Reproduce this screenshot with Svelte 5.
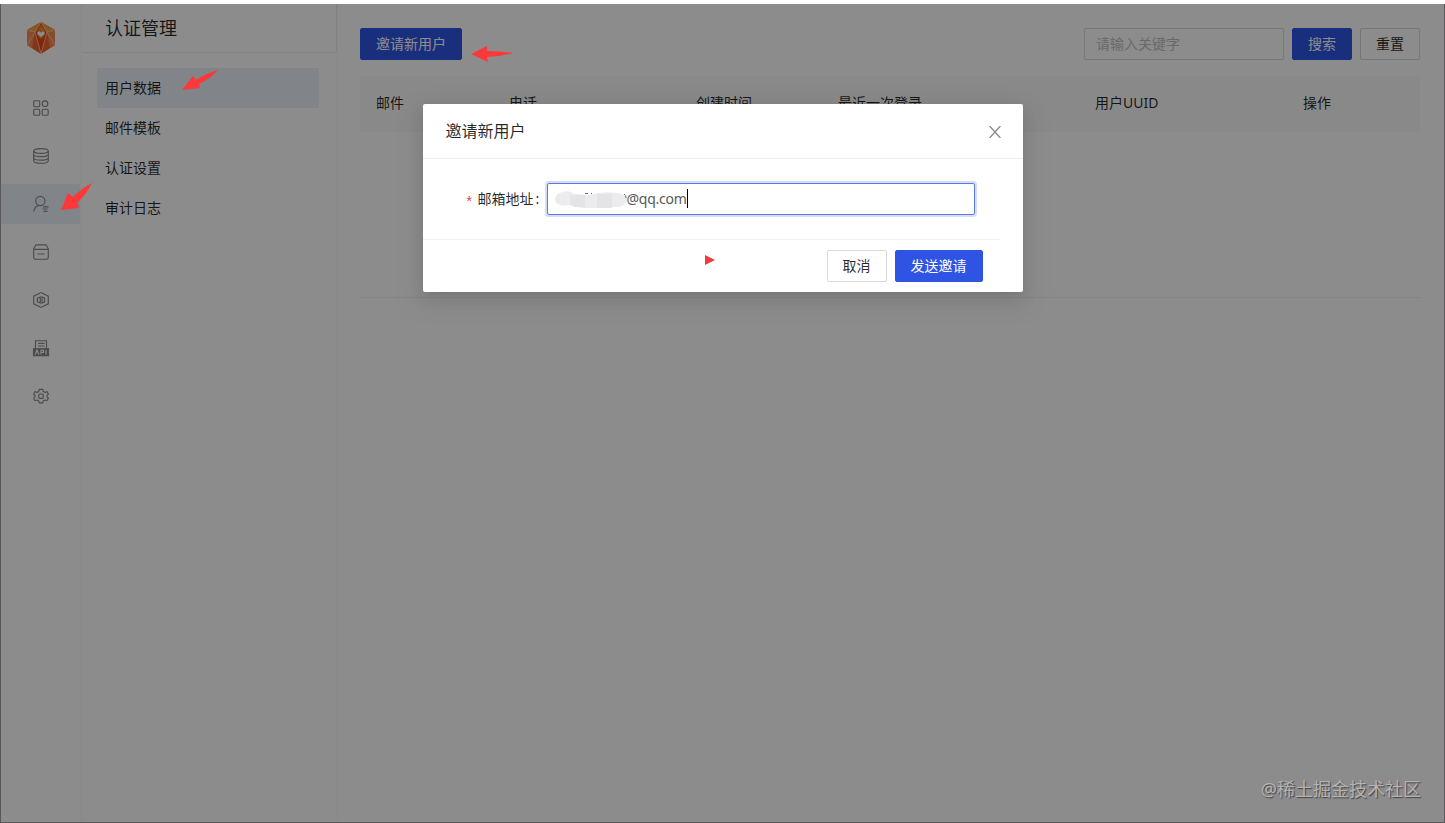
<script>
  let email = "@qq.com"
  let active = "user"
  const navItems = ["apps", "database", "user", "storage", "function", "api", "settings"]
  const menuItems = ["用户数据", "邮件模板", "认证设置", "审计日志"]
  const columns = ["邮件", "电话", "创建时间", "最近一次登录", "用户UUID", "操作"]
</script>

<div class="page">
  <nav class="rail">
    <svg class="logo" viewBox="0 0 28 32" width="28" height="32">
      <path d="M14 0 L28 8 V23 L14 32 L0 23 V8 Z" fill="#f0602a" />
      <path d="M14 0 L28 8 L20 10 Z M14 0 L0 8 L8 10 Z" fill="#f3a04a" />
      <path d="M0 8 L8 10 L5 26 L0 23 Z M28 8 L20 10 L23 26 L28 23 Z" fill="#f58a58" />
      <path d="M8 10 L14 32 L20 10 Z" fill="#e8431c" />
      <path d="M0 8 L8 10 L14 32 L20 10 L28 8 M8 10 L14 0 L20 10 M8 10 L0 23 M20 10 L28 23" fill="none" stroke="#ffd0a0" stroke-width=".8" />
      <path d="M14 3 C16 7 19 8 18 12 C17 15 14 17 14 17 C14 17 11 15 10 12 C9 9 13 8 14 3 Z" fill="#f08a2a" />
      <path d="M14 15 L10.5 12 C10 9 13 9 14 11 C15 9 18 9 17.5 12 Z" fill="#fff" />
    </svg>
    {#each navItems as item}
      <div class="rail-item" class:active={item == active}>
        <svg viewBox="0 0 16 16" width="16" height="16">
          {#if item == "apps"}
            <rect x=".7" y=".7" width="6" height="6" rx="1" />
            <circle cx="12" cy="3.7" r="2.8" />
            <rect x=".7" y="9.2" width="6" height="6" rx="1.3" />
            <rect x="9.2" y="9.2" width="6" height="6" rx="1.3" />
          {:else if item == "database"}
            <ellipse cx="8" cy="3" rx="7.3" ry="2.4" />
            <path d="M.7 3 V13 C.7 16 15.3 16 15.3 13 V3 M.7 6.5 C.7 9.4 15.3 9.4 15.3 6.5 M.7 10 C.7 12.8 15.3 12.8 15.3 10" />
          {:else if item == "user"}
            <circle cx="7.3" cy="5" r="4.6" />
            <path d="M.8 15.5 C1.2 12 3.2 10.2 5.6 9.4 M10 10.8 H15.5 M9.5 13 H14.5 M10.5 15.3 H14.5" />
          {:else if item == "storage"}
            <path d="M3 .8 H13 L15.3 4.8 V13.5 Q15.3 15.2 13.6 15.2 H2.4 Q.7 15.2 .7 13.5 V4.8 Z M.7 5.4 H15.3 M4.5 10 H11.5" />
          {:else if item == "function"}
            <path d="M8 .6 L15.3 4.2 V11.8 L8 15.4 L.7 11.8 V4.2 Z" />
            <path d="M7.3 5 L4.4 6.2 V9.8 L7.3 11 Z M9 5 V11 L11.6 9.8 V6.2 Z" />
          {:else if item == "api"}
            <path d="M2.5 8 V.7 H13.5 V8 M5 3.4 H11.5 M5 6 H11.5" />
            <rect class="fill" x=".5" y="8.7" width="15" height="7" />
            <path class="light" d="M2.2 14.5 L4 10 L5.8 14.5 M8 14.5 V10.3 H10.5 V12.5 H8 M13 10 V14.5" />
          {:else}
            <path d="M6.3 1.3 H9.7 L10.3 3.5 L12.2 4.4 L14.2 3.8 L15.4 6.2 L14 7.6 V8.8 L15.4 10.2 L14 12.6 L12 12 L10.3 12.9 L9.7 14.9 H6.3 L5.7 12.9 L4 12 L2 12.6 L.6 10.2 L2 8.8 V7.6 L.6 6.2 L2 3.8 L4 4.4 L5.7 3.5 Z" />
            <rect x="5.8" y="6" width="4.4" height="4.4" rx="1" />
          {/if}
        </svg>
      </div>
    {/each}
  </nav>

  <aside>
    <h1>认证管理</h1>
    <ul>
      {#each menuItems as item, i}
        <li class:selected={i == 0}>{item}</li>
      {/each}
    </ul>
  </aside>

  <main>
    <div class="toolbar">
      <button class="btn primary">邀请新用户</button>
      <div class="search">
        <input class="keyword" placeholder="请输入关键字" />
        <button class="btn primary">搜索</button>
        <button class="btn">重置</button>
      </div>
    </div>
    <div class="table">
      <div class="thead">
        {#each columns as column}
          <span>{column}</span>
        {/each}
      </div>
      <div class="tbody"></div>
    </div>
  </main>
</div>

<div class="mask">
  <div class="modal">
    <header>
      <span>邀请新用户</span>
      <svg viewBox="0 0 12 12" width="12" height="12"><path d="M.6 0 L11.4 12 M11.4 0 L.6 12" /></svg>
    </header>
    <div class="form-row">
      <span class="label"><i>*</i>邮箱地址<b>:</b></span>
      <div class="field">
        <svg class="smudge" viewBox="0 0 72 20" width="72" height="20">
          <path d="M8 3 Q15 1 19 5 L34 6 Q47 2 62 4 Q72 5 72 11 Q71 18 62 18 L45 19 L28 19 Q22 19 15 16 Q0 18 0 10 Q1 4 8 3 Z" fill="#ececee" />
          <path d="M15 6 H30 V18 H20 L15 16 Z M42 5 H57 V19 H42 Z" fill="#e4e4e6" />
          <path d="M30 4.5 H33 M36 5 L37 4 M69 5 Q71 6 71 9" fill="none" stroke="#666" />
        </svg>
        <span class="value">{email}</span>
        <span class="caret"></span>
      </div>
    </div>
    <footer>
      <button class="btn">取消</button>
      <button class="btn primary">发送邀请</button>
    </footer>
  </div>
</div>

<svg class="marks" viewBox="0 0 1445 823" width="1445" height="823">
  <path d="M182 90 L193 76 L196 80 Q207 73 218 70 Q210 79 199 84 L200 88 Z" />
  <path d="M61 210 L68 193 L73 197 Q82 188 92 183 Q86 195 77 203 L79 208 Z" />
  <path d="M471 54 L487 46 V51 Q500 51 513 53 Q500 57 487 57 L488 62 Z" />
  <path d="M705 255 L715 260 L705 265 Z" fill="#ee3b3b" />
</svg>
<div class="watermark">@稀土掘金技术社区</div>
<div class="frame"></div>

<style>
  :global(body) {
    background: #fff;
    overflow: hidden;
    font-family: "Noto Sans", "Noto Sans CJK SC", sans-serif;
    font-size: 14px;
    color: rgba(0, 0, 0, 0.85);
  }
  .page {
    display: flex;
    box-sizing: border-box;
    height: 823px;
    padding-top: 4px;
  }
  .rail {
    width: 80px;
    display: flex;
    flex-direction: column;
    align-items: center;
    gap: 8px;
    padding: 18px 0 0 1px;
    box-sizing: border-box;
  }
  .logo {
    margin-bottom: 26px;
  }
  .rail-item {
    display: flex;
    align-items: center;
    justify-content: center;
    width: 79px;
    height: 40px;
    flex: none;
  }
  .rail-item.active {
    background: #ecf1f9;
  }
  .rail-item svg {
    fill: none;
    stroke: #8a8a8a;
    stroke-width: 1.15;
    overflow: visible;
  }
  .rail-item .fill {
    fill: #858585;
  }
  .rail-item .light {
    stroke: #fff;
  }
  aside {
    width: 258px;
    box-sizing: border-box;
    border-left: 3px solid #fbfbfb;
    border-right: 1px solid #f7f7f7;
  }
  h1 {
    box-sizing: border-box;
    height: 49px;
    margin: 0;
    padding-left: 22px;
    font-size: 18px;
    font-weight: 400;
    line-height: 49px;
    border-bottom: 1px solid #ececec;
    border-right: 1px solid #ececec;
  }
  ul {
    margin: 15px 18px 0 14px;
    padding: 0;
    list-style: none;
  }
  li {
    height: 40px;
    padding-left: 8px;
    line-height: 39px;
  }
  .selected {
    background: #ecf1f9;
  }
  main {
    flex: 1;
    padding: 24px 25px 0 22px;
  }
  .toolbar, .search {
    display: flex;
    justify-content: space-between;
    gap: 8px;
  }
  .btn {
    box-sizing: border-box;
    height: 32px;
    padding: 0 15px;
    border: 1px solid #d9d9d9;
    border-radius: 2px;
    background: #fff;
    color: rgba(0, 0, 0, 0.85);
    font: inherit;
    line-height: 28px;
    white-space: nowrap;
  }
  .btn.primary {
    border-color: #2f54e4;
    background: #2f54e4;
    color: #fff;
  }
  .keyword {
    box-sizing: border-box;
    width: 200px;
    height: 32px;
    padding: 0 11px 2px;
    border: 1px solid #d9d9d9;
    border-radius: 2px;
    font: inherit;
  }
  .keyword::placeholder {
    color: #bfbfbf;
  }
  .table {
    margin-top: 16px;
  }
  .thead {
    display: grid;
    grid-template-columns: 133px 187px 142px 257px 208px 1fr;
    height: 56px;
    background: #fafafa;
    line-height: 54px;
  }
  .thead span {
    padding-left: 16px;
  }
  .tbody {
    height: 165px;
    border-bottom: 1px solid #f0f0f0;
  }
  .mask {
    position: absolute;
    inset: 4px 0 0 0;
    padding-top: 100px;
    background: rgba(0, 0, 0, 0.45);
  }
  .modal {
    width: 600px;
    height: 188px;
    margin: 0 auto;
    background: #fff;
    border-radius: 2px;
    box-shadow: 0 3px 6px -4px rgba(0, 0, 0, 0.12), 0 6px 16px rgba(0, 0, 0, 0.08), 0 9px 28px 8px rgba(0, 0, 0, 0.05);
  }
  header {
    display: flex;
    align-items: center;
    justify-content: space-between;
    height: 54px;
    padding: 0 22px 0 23px;
    border-bottom: 1px solid #ececec;
    font-size: 16px;
  }
  header span {
    padding-bottom: 2px;
  }
  header svg {
    margin-top: 2px;
    fill: none;
    stroke: #888;
    stroke-width: 1.3;
  }
  .form-row {
    display: flex;
    align-items: center;
    height: 80px;
  }
  .label {
    width: 124px;
    box-sizing: border-box;
    padding: 0 0 2px 44px;
    white-space: nowrap;
  }
  .label i {
    display: inline-block;
    width: 11px;
    color: #e8403f;
    font-family: "Liberation Sans", sans-serif;
    font-style: normal;
    line-height: 10px;
    vertical-align: -2px;
  }
  .label b {
    margin-left: 2px;
    font-weight: 400;
  }
  .field {
    display: flex;
    align-items: center;
    box-sizing: border-box;
    width: 428px;
    height: 32px;
    padding-left: 7px;
    border: 1px solid #587be0;
    border-radius: 2px;
    box-shadow: 0 0 0 2px rgba(47, 84, 228, 0.2);
    color: #595959;
  }
  .value {
    padding-bottom: 1px;
    letter-spacing: -0.25px;
  }
  .caret {
    width: 1px;
    height: 19px;
    margin-bottom: 1px;
    background: #000;
  }
  footer {
    display: flex;
    justify-content: flex-end;
    gap: 8px;
    width: 560px;
    padding: 10px 17px 0 0;
    border-top: 1px solid #f0f0f0;
  }
  .marks {
    position: absolute;
    top: 0;
    left: 0;
    fill: #fd3838;
    pointer-events: none;
  }
  .watermark {
    position: absolute;
    right: 24px;
    bottom: 21px;
    color: #b3b3b3;
    font-size: 18px;
    line-height: 26px;
    text-shadow: 1px 1px 1px #444;
  }
  .frame {
    position: absolute;
    inset: 4px 0 0 0;
    border: 1px solid #5b585b;
    border-top: 0;
    pointer-events: none;
  }
</style>
